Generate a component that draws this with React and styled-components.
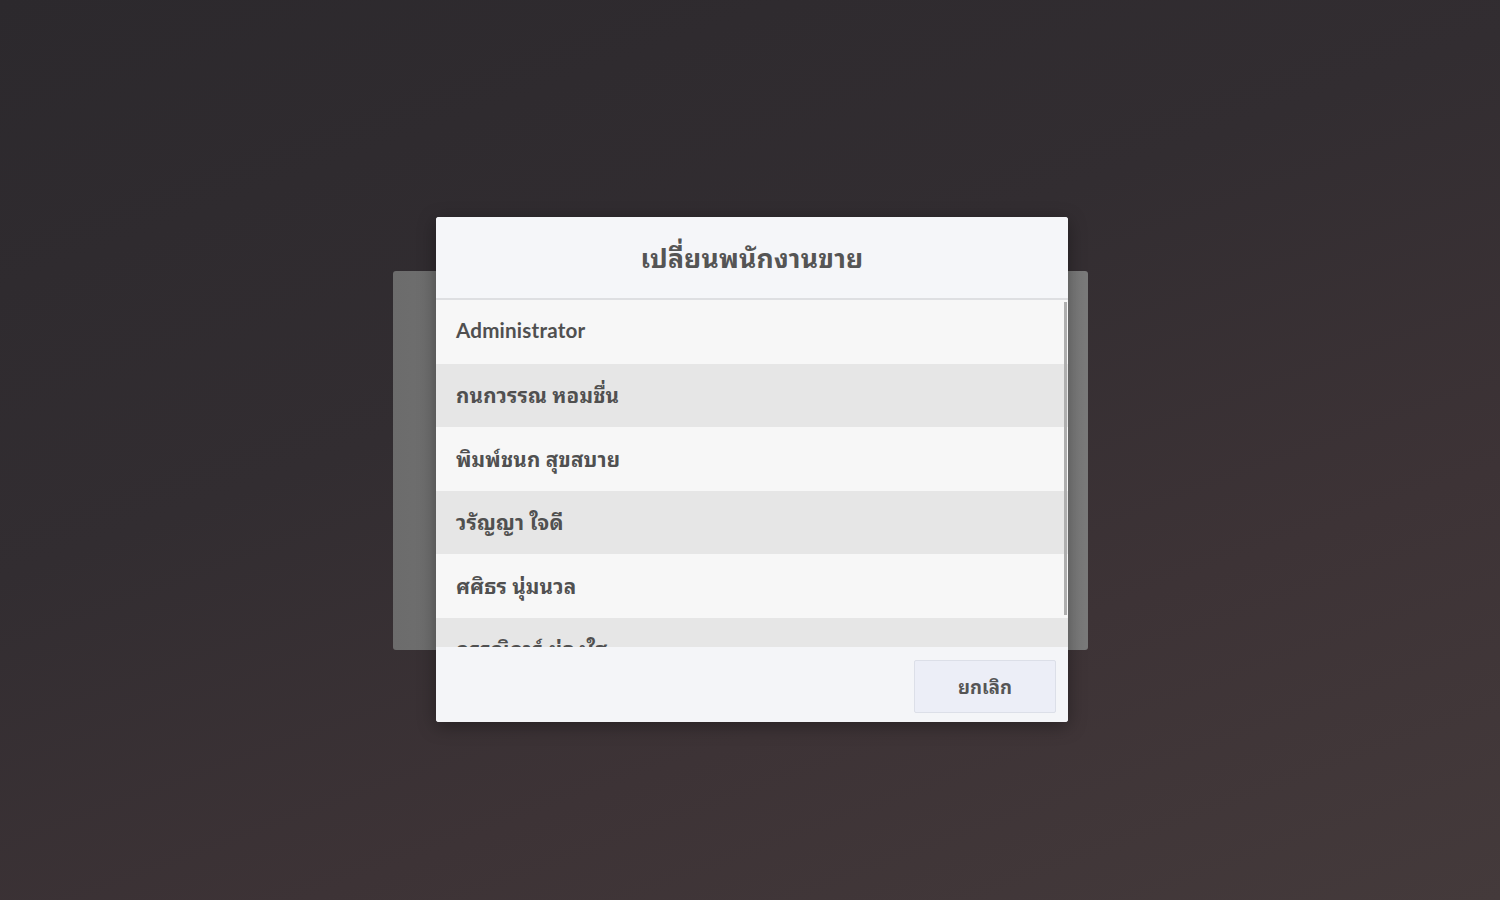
import React from "react";
import styled, { createGlobalStyle } from "styled-components";

const Global = createGlobalStyle`
  html, body { margin: 0; padding: 0; }
  body {
    font-family: Lato, "Noto Sans Thai Looped", Loma, Garuda, Tahoma, "Noto Sans Thai", "Noto Sans", "DejaVu Sans", sans-serif;
    background: #2e2a2e;
  }
  * { box-sizing: border-box; }
`;

const Page = styled.div`
  position: relative;
  width: 100vw;
  height: 100vh;
  overflow: hidden;
  background: linear-gradient(160deg, #2c292d 0%, #322d31 40%, #3d3336 70%, #443a3b 100%);
  padding: 271px 0 0 393px;
`;

const BackPanel = styled.div`
  width: 695px;
  height: 379px;
  border-radius: 3px;
  background: linear-gradient(90deg, #6c6c6c 0%, #737373 20%, #747474 80%, #7a7a7a 100%);
`;

const Modal = styled.div`
  position: absolute;
  left: 436px;
  top: 217px;
  width: 632px;
  height: 505px;
  display: flex;
  flex-direction: column;
  background: #f4f5f8;
  border-radius: 3px;
  overflow: hidden;
  box-shadow: 0 4px 18px rgba(0, 0, 0, 0.35);
`;

const Header = styled.div`
  height: 83px;
  flex: none;
  display: flex;
  align-items: center;
  justify-content: center;
  background: #f5f6f9;
  border-bottom: 2px solid #dedfe2;
  padding-bottom: 3px;
`;

const Title = styled.h2`
  margin: 0;
  font-size: 26.5px;
  font-weight: 700;
  color: #555555;
  letter-spacing: 0.2px;
`;

const ScrollArea = styled.div`
  position: relative;
  height: 347px;
  flex: none;
`;

const List = styled.div`
  height: 100%;
  overflow-y: auto;
  scrollbar-width: none;
  &::-webkit-scrollbar { display: none; }
`;

const Thumb = styled.div`
  position: absolute;
  right: 1px;
  top: 2px;
  width: 3px;
  height: 313px;
  background: #aeaeae;
`;

const Row = styled.div`
  height: 63.5px;
  display: flex;
  align-items: center;
  padding: 0 0 3px 20px;
  background: ${(p) => (p.$alt ? "#e6e6e6" : "#f7f7f7")};
  font-size: 20.6px;
  font-weight: 700;
  color: #505050;
  letter-spacing: 0.2px;
  cursor: pointer;
`;

const Footer = styled.div`
  flex: 1;
  display: flex;
  justify-content: flex-end;
  align-items: flex-start;
  padding: 13px 12px 0 0;
  background: #f4f5f8;
`;

const Button = styled.button`
  width: 142px;
  height: 53px;
  padding: 0 0 3px;
  background: #eceef7;
  border: 1px solid #dcdfe8;
  border-radius: 2px;
  font-family: inherit;
  font-size: 18.5px;
  font-weight: 700;
  color: #555555;
  cursor: pointer;
`;

const names = [
  "Administrator",
  "กนกวรรณ หอมชื่น",
  "พิมพ์ชนก สุขสบาย",
  "วรัญญา ใจดี",
  "ศศิธร นุ่มนวล",
  "กรรณิการ์ ผ่องใส",
];

export default function App() {
  return (
    <Page>
      <Global />
      <BackPanel />
      <Modal>
        <Header>
          <Title>เปลี่ยนพนักงานขาย</Title>
        </Header>
        <ScrollArea>
          <List>
            {names.map((n, i) => (
              <Row key={n} $alt={i % 2 === 1}>
                {n}
              </Row>
            ))}
          </List>
          <Thumb />
        </ScrollArea>
        <Footer>
          <Button>ยกเลิก</Button>
        </Footer>
      </Modal>
    </Page>
  );
}
